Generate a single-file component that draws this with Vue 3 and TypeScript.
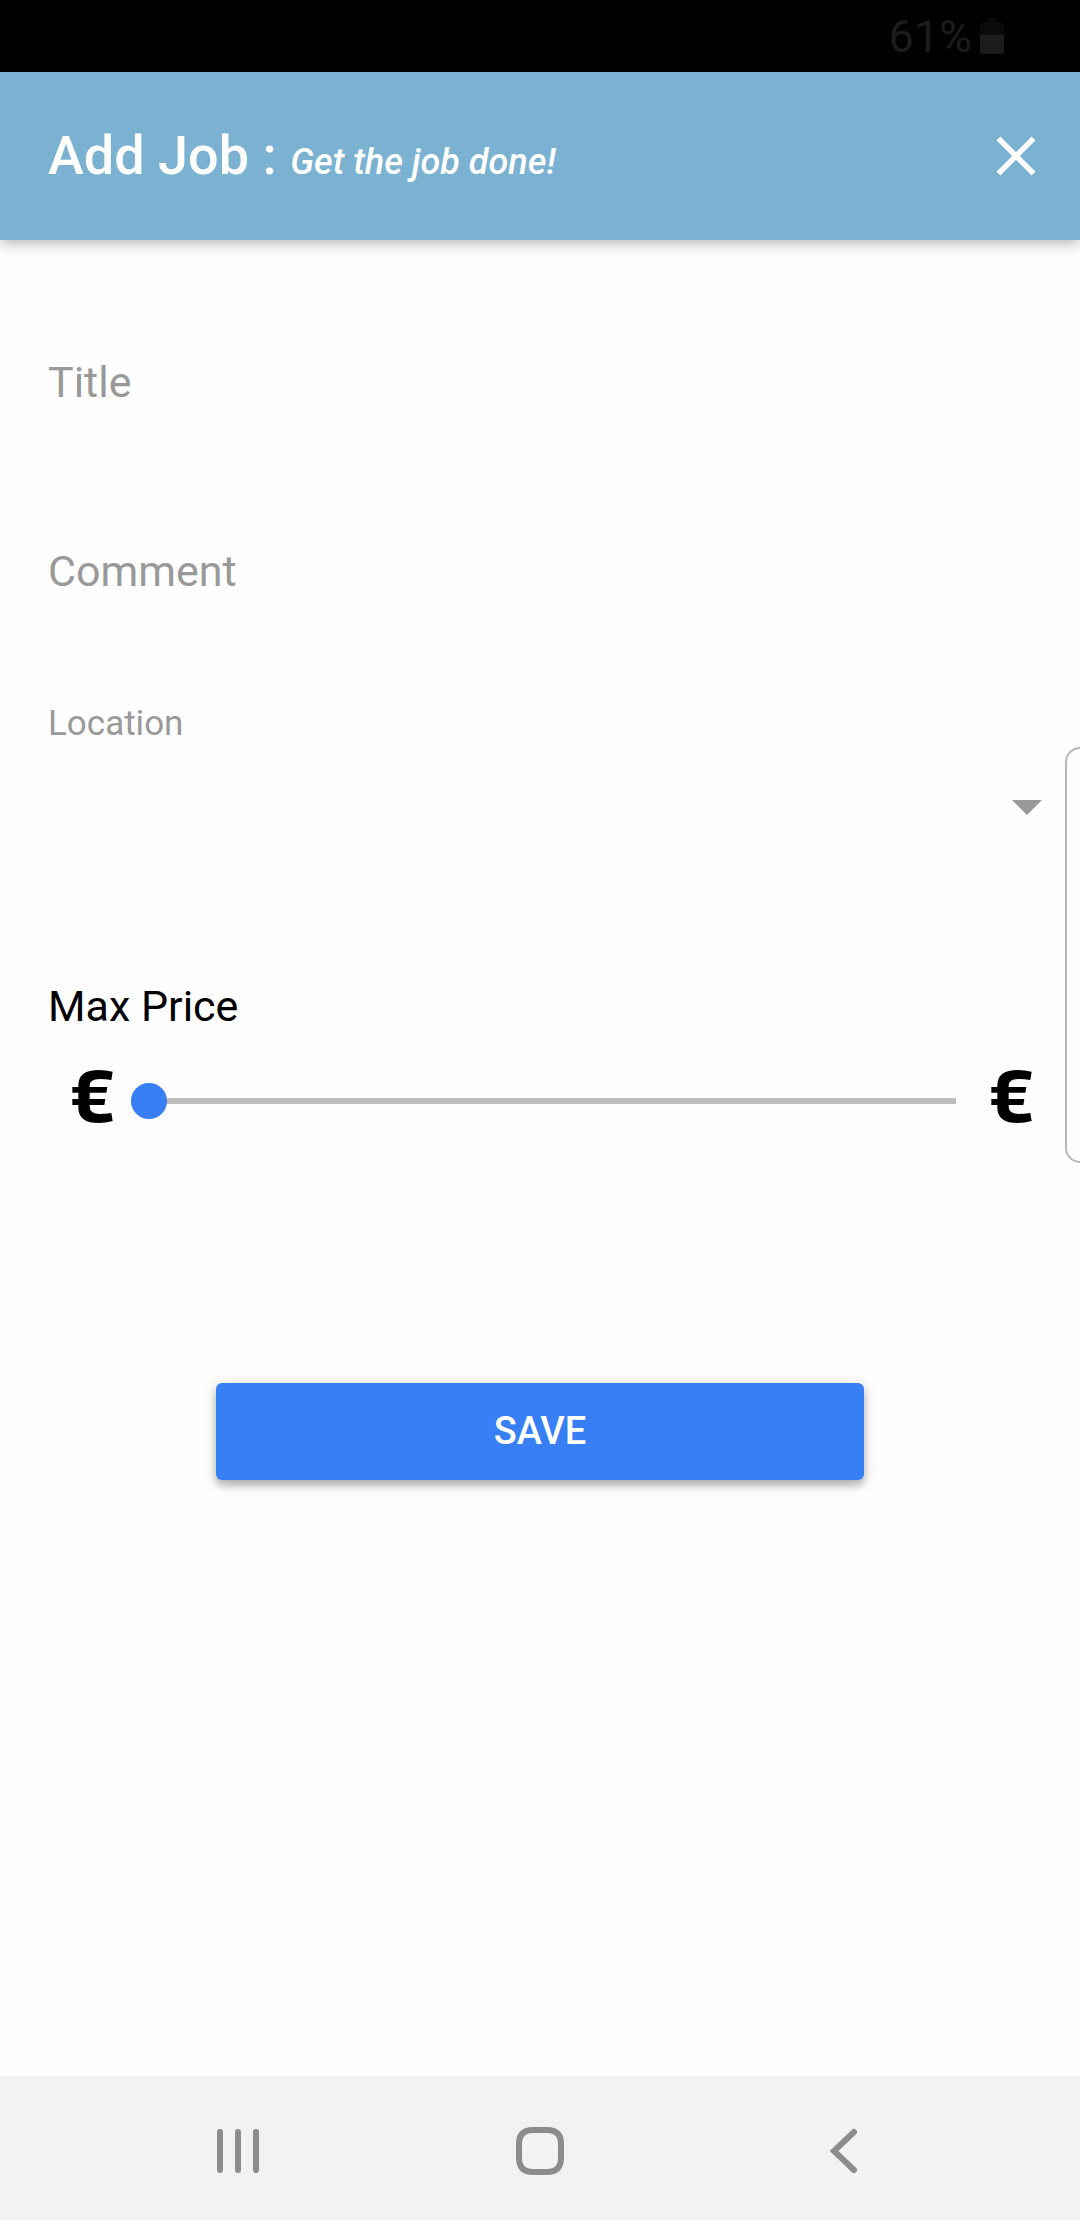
<script setup lang="ts">
import { ref } from 'vue'

const title = ref('')
const comment = ref('')
const location = ref('')
const maxPrice = ref(0)
const locations: string[] = []
</script>

<template>
  <div class="screen">
    <div class="status">
      <span>61%</span>
      <svg class="battery" viewBox="0 0 24 36" aria-hidden="true">
        <path d="M7 0h10v5h5q2 0 2 2v10H0V7q0-2 2-2h5z" fill="#0b0b0b" />
        <path d="M0 17h24v17q0 2-2 2H2q-2 0-2-2z" fill="#1c1c1c" />
      </svg>
    </div>

    <header class="toolbar">
      <h1>Add Job : <em>Get the job done!</em></h1>
      <button class="close" type="button" aria-label="Close">
        <svg viewBox="0 0 40 40" aria-hidden="true">
          <path d="M2.5 2.5l35 35M37.5 2.5l-35 35" stroke="#fff" stroke-width="5.4" />
        </svg>
      </button>
    </header>

    <main>
      <form @submit.prevent>
        <div class="field">
          <label for="title" :class="{ filled: title }">Title</label>
          <input id="title" v-model="title" type="text" />
        </div>
        <div class="field">
          <label for="comment" :class="{ filled: comment }">Comment</label>
          <input id="comment" v-model="comment" type="text" />
        </div>
        <div class="choice">
          <label for="location">Location</label>
          <div class="picker">
            <select id="location" v-model="location">
              <option v-for="place in locations" :key="place">{{ place }}</option>
            </select>
            <svg class="caret" viewBox="0 0 30 15" aria-hidden="true"><path d="M0 0h30L15 15z" fill="#999" /></svg>
          </div>
        </div>
        <div class="price">
          <label for="price">Max Price</label>
          <div class="range">
            <svg class="euro" viewBox="0 0 121 159" aria-hidden="true">
              <path d="M121 5l-4 25Q99 27 82 27Q52 27 52 47v4h53l-3 17H52v19h47l-3 18H52v4q0 23 30 23q16 0 35-3l4 24q-21 6-41 6Q18 159 18 113v-8H0V87h18V68H0V51h18v-6Q18 0 80 0q21 0 41 5z" />
            </svg>
            <input id="price" v-model.number="maxPrice" type="range" min="0" max="100" />
            <svg class="euro" viewBox="0 0 121 159" aria-hidden="true">
              <path d="M121 5l-4 25Q99 27 82 27Q52 27 52 47v4h53l-3 17H52v19h47l-3 18H52v4q0 23 30 23q16 0 35-3l4 24q-21 6-41 6Q18 159 18 113v-8H0V87h18V68H0V51h18v-6Q18 0 80 0q21 0 41 5z" />
            </svg>
          </div>
        </div>
        <button class="save" type="submit">SAVE</button>
      </form>
    </main>

    <nav class="system">
      <button type="button" aria-label="Recent apps">
        <svg viewBox="0 0 48 48" aria-hidden="true"><path d="M6 5v38M24 5v38M42 5v38" /></svg>
      </button>
      <button type="button" aria-label="Home">
        <svg viewBox="0 0 48 48" aria-hidden="true"><path d="M17 3h14q14 0 14 14v14q0 14-14 14H17Q3 45 3 31V17Q3 3 17 3z" /></svg>
      </button>
      <button type="button" aria-label="Back">
        <svg viewBox="0 0 48 48" aria-hidden="true"><path d="M36 5L16 24l20 19" /></svg>
      </button>
    </nav>

    <div class="edge" aria-hidden="true"></div>
  </div>
</template>

<style>
body {
  background: #fefefe;
}
</style>

<style scoped>
.screen {
  position: relative;
  display: flex;
  flex-direction: column;
  min-height: 100vh;
  overflow: hidden;
  background: #fefefe;
  color: #000;
  font-family: Roboto, "Noto Sans", sans-serif;
  font-size: 43px;
  line-height: 48px;
}
.screen * {
  box-sizing: border-box;
}
button,
input,
select {
  margin: 0;
  padding: 0;
  border: 0;
  background: none;
  color: inherit;
  font: inherit;
  outline: none;
}
svg {
  display: block;
}
.status {
  display: flex;
  align-items: center;
  justify-content: flex-end;
  gap: 8px;
  height: 72px;
  padding-right: 76px;
  background: #000;
  color: #1c1c1c;
  font-size: 45px;
}
.status span {
  padding-top: 2px;
}
.battery {
  width: 24px;
  height: 36px;
}
.toolbar {
  display: flex;
  align-items: center;
  justify-content: space-between;
  height: 168px;
  padding: 0 44px 0 48px;
  background: #7bb2d1;
  color: #fff;
  box-shadow: 0 3px 14px rgba(0, 0, 0, 0.3);
}
h1 {
  margin: 0;
  padding-top: 6px;
  font-size: 54px;
  font-weight: 500;
  line-height: 64px;
}
h1 em {
  font-size: 36px;
}
.close svg {
  width: 40px;
  height: 40px;
}
main {
  flex: 1;
  padding-top: 47px;
}
.field {
  display: grid;
  align-items: center;
  height: 189px;
  padding: 0 48px;
}
.field label,
.field input {
  grid-area: 1 / 1;
}
.field label,
.choice label {
  color: #999;
}
.field label.filled {
  visibility: hidden;
}
.choice {
  padding: 39px 36px 0 48px;
}
.choice label {
  display: block;
  font-size: 35px;
  line-height: 40px;
}
.picker {
  display: grid;
  align-items: center;
  height: 126px;
}
.picker select,
.caret {
  grid-area: 1 / 1;
}
.picker select {
  width: 100%;
  height: 100%;
  appearance: none;
}
.caret {
  justify-self: end;
  width: 30px;
  height: 15px;
  margin-right: 2px;
  pointer-events: none;
}
.price {
  padding: 112px 48px 0;
}
.price label {
  display: block;
}
.range {
  display: flex;
  align-items: center;
  height: 108px;
  margin-top: 17px;
  padding-left: 24px;
}
.euro {
  flex: none;
  width: 41px;
  height: 53px;
  margin-bottom: 9px;
}
.range input {
  flex: 1;
  min-width: 0;
  height: 36px;
  margin: 0 35px 0 18px;
  appearance: none;
}
.range input::-webkit-slider-runnable-track {
  height: 6px;
  background: #bdbdbd;
}
.range input::-webkit-slider-thumb {
  width: 36px;
  height: 36px;
  margin-top: -15px;
  border-radius: 50%;
  background: #387ef5;
  appearance: none;
}
.save {
  display: block;
  width: 60%;
  height: 97px;
  margin: 228px auto 48px;
  padding-bottom: 2px;
  border-radius: 6px;
  background: #387ef5;
  color: #fff;
  font-size: 38px;
  font-weight: 500;
  box-shadow: 0 6px 6px rgba(0, 0, 0, 0.18), 0 3px 15px rgba(0, 0, 0, 0.2);
}
.system {
  display: flex;
  justify-content: center;
  height: 144px;
  background: #f2f2f2;
}
.system button {
  display: grid;
  flex: 0 0 28%;
  place-items: center;
}
.system svg {
  width: 48px;
  height: 48px;
  margin-top: 6px;
  fill: none;
  stroke: #8c8c8c;
  stroke-width: 6;
  stroke-linecap: round;
}
.edge {
  position: absolute;
  top: 747px;
  right: 0;
  width: 15px;
  height: 416px;
  border: 2px solid #b8b8b8;
  border-right: 0;
  border-radius: 18px 0 0 18px;
}
</style>
